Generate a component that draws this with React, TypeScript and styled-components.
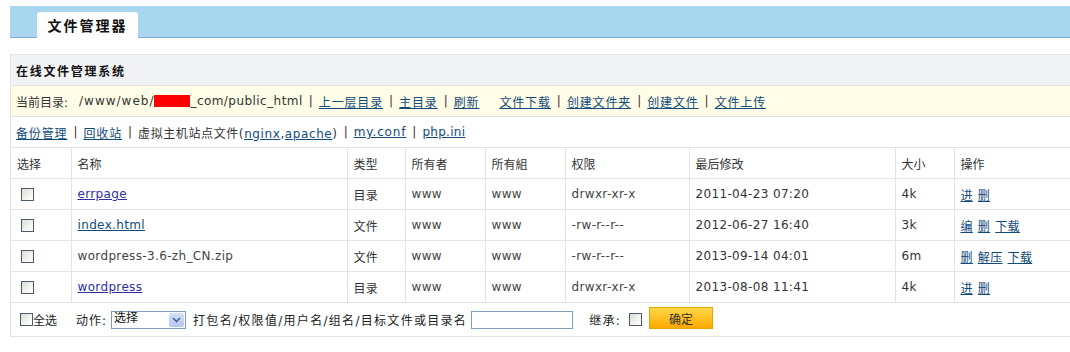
import React from 'react'
import styled, { createGlobalStyle } from 'styled-components'

const GlobalStyle = createGlobalStyle`
  html, body {
    margin: 0;
    padding: 0;
    background: #fff;
  }
  body {
    font-family: "DejaVu Sans", Verdana, "Noto Sans CJK SC", sans-serif;
    font-size: 12px;
    color: #333;
  }
`

const Page = styled.div`
  padding: 6px 0 0 10px;
  width: 1060px;
`

const TopBar = styled.div`
  height: 32px;
  background: #a8d6ee;
  border-bottom: 1px solid #7fb0cf;
  display: flex;
  align-items: flex-end;
  padding-left: 27px;
  box-sizing: border-box;
`

const Tab = styled.div`
  width: 101px;
  height: 26px;
  background: #fff;
  border-radius: 3px 3px 0 0;
  margin-bottom: -1px;
  display: flex;
  align-items: center;
  justify-content: center;
  font-size: 14px;
  font-weight: bold;
  letter-spacing: 2px;
  color: #111;
`

const Panel = styled.div`
  margin-top: 16px;
  border-left: 1px solid #e3e3e3;
`

const Row = styled.div<{ $bg?: string; $height?: number }>`
  height: ${(p) => p.$height ?? 31}px;
  box-sizing: border-box;
  display: flex;
  align-items: center;
  padding-left: 5px;
  background: ${(p) => p.$bg ?? '#fff'};
  border-top: 1px solid #e2e4e6;
  white-space: nowrap;
  letter-spacing: 0.85px;
`

const PanelTitle = styled.span`
  font-weight: bold;
  letter-spacing: 1.7px;
  color: #111;
`

const A = styled.a<{ $visited?: boolean }>`
  color: ${(p) => (p.$visited ? '#2e2ea8' : '#124a7c')};
  text-decoration: underline;
  cursor: pointer;
`

const Sep = styled.span`
  margin: 0 6px;
  color: #4a2a2a;
  letter-spacing: 0;
`

const Path = styled.span<{ $ls: number }>`
  letter-spacing: ${(p) => p.$ls}px;
`

const Redact = styled.span`
  display: inline-block;
  width: 36px;
  height: 12px;
  background: #ff0000;
`

const Gap = styled.span<{ $w: number }>`
  display: inline-block;
  width: ${(p) => p.$w}px;
`

const Table = styled.table`
  border-collapse: collapse;
  width: 100%;
  table-layout: fixed;
  letter-spacing: 0.35px;

  th,
  td {
    height: 30px;
    padding: 0 0 0 6px;
    border-top: 1px solid #e2e4e6;
    border-left: 1px solid #e2e4e6;
    text-align: left;
    font-weight: normal;
    white-space: nowrap;
    color: #333;
  }
  th {
    letter-spacing: 0;
  }
  th:first-child,
  td:first-child {
    border-left: none;
  }
`

const Muted = styled.span`
  color: #444;
`

const Box = styled.span<{ $ml?: number }>`
  display: inline-block;
  flex: none;
  width: 11px;
  height: 11px;
  margin-left: ${(p) => p.$ml ?? 0}px;
  border: 1px solid #4b5b6b;
  background: linear-gradient(135deg, #dcdcd6 0%, #f4f4f0 60%, #ffffff 100%);
  vertical-align: middle;
`

const Ops = styled.span`
  display: inline-flex;
  gap: 5px;
`

const Footer = styled(Row)`
  border-bottom: 1px solid #e2e4e6;
  padding-left: 9px;
  letter-spacing: 0;
`

const Label = styled.span<{ $ml?: number; $ls?: number }>`
  margin-left: ${(p) => p.$ml ?? 0}px;
  letter-spacing: ${(p) => p.$ls ?? 0}px;
  color: #222;
`

const Select = styled.div`
  margin-left: 4px;
  width: 75px;
  height: 18px;
  border: 1px solid #7f9db9;
  box-sizing: border-box;
  display: flex;
  align-items: flex-start;
  justify-content: space-between;
  background: #fff;
  padding-left: 2px;
  line-height: 13px;
  color: #111;
`

const SelectArrow = styled.span`
  width: 15px;
  height: 14px;
  margin: 1px;
  border-radius: 2px;
  background: linear-gradient(#d3e1fb, #b4c8f2);
  display: flex;
  align-items: center;
  justify-content: center;
`

const TextInput = styled.div`
  margin-left: 4px;
  width: 102px;
  height: 18px;
  border: 1px solid #7f9db9;
  box-sizing: border-box;
  background: #fff;
`

const Button = styled.div`
  margin-left: 7px;
  width: 64px;
  height: 22px;
  box-sizing: border-box;
  border: 1px solid #e8a400;
  background: linear-gradient(#ffd84a, #ffa800);
  display: flex;
  align-items: center;
  justify-content: center;
  color: #333;
  margin-top: -3px;
`

const files = [
  { name: 'errpage', link: true, visited: true, type: '目录', perm: 'drwxr-xr-x', date: '2011-04-23 07:20', size: '4k', ops: ['进', '删'] },
  { name: 'index.html', link: true, visited: false, type: '文件', perm: '-rw-r--r--', date: '2012-06-27 16:40', size: '3k', ops: ['编', '删', '下载'] },
  { name: 'wordpress-3.6-zh_CN.zip', link: false, visited: false, type: '文件', perm: '-rw-r--r--', date: '2013-09-14 04:01', size: '6m', ops: ['删', '解压', '下载'] },
  { name: 'wordpress', link: true, visited: true, type: '目录', perm: 'drwxr-xr-x', date: '2013-08-08 11:41', size: '4k', ops: ['进', '删'] },
]

export default function App() {
  return (
    <>
      <GlobalStyle />
      <Page>
        <TopBar>
          <Tab>文件管理器</Tab>
        </TopBar>
        <Panel>
          <Row $bg="#f2f3f5">
            <PanelTitle>在线文件管理系统</PanelTitle>
          </Row>
          <Row $bg="#fffde8">
            <Path $ls={0}>当前目录:</Path>
            <Gap $w={11} />
            <Path $ls={1}>/www/web/</Path>
            <Redact />
            <Path $ls={0.45}>_com/public_html</Path>
            <Sep>|</Sep>
            <A>上一层目录</A>
            <Sep>|</Sep>
            <A>主目录</A>
            <Sep>|</Sep>
            <A>刷新</A>
            <Gap $w={20} />
            <A>文件下载</A>
            <Sep>|</Sep>
            <A>创建文件夹</A>
            <Sep>|</Sep>
            <A>创建文件</A>
            <Sep>|</Sep>
            <A>文件上传</A>
          </Row>
          <Row>
            <A>备份管理</A>
            <Sep>|</Sep>
            <A>回收站</A>
            <Sep>|</Sep>
            <Path $ls={0.6}>
              虚拟主机站点文件(<A>nginx</A>,<A>apache</A>)
            </Path>
            <Sep>|</Sep>
            <A>my.conf</A>
            <Sep>|</Sep>
            <Path $ls={0.3}>
              <A>php.ini</A>
            </Path>
          </Row>
          <Table>
            <colgroup>
              <col style={{ width: 60 }} />
              <col style={{ width: 276 }} />
              <col style={{ width: 58 }} />
              <col style={{ width: 80 }} />
              <col style={{ width: 80 }} />
              <col style={{ width: 124 }} />
              <col style={{ width: 206 }} />
              <col style={{ width: 59 }} />
              <col />
            </colgroup>
            <thead>
              <tr>
                <th>选择</th>
                <th>名称</th>
                <th>类型</th>
                <th>所有者</th>
                <th>所有組</th>
                <th>权限</th>
                <th>最后修改</th>
                <th>大小</th>
                <th>操作</th>
              </tr>
            </thead>
            <tbody>
              {files.map((f) => (
                <tr key={f.name}>
                  <td>
                    <Box $ml={4} />
                  </td>
                  <td>{f.link ? <A $visited={f.visited}>{f.name}</A> : <Muted>{f.name}</Muted>}</td>
                  <td>{f.type}</td>
                  <td>
                    <Muted>www</Muted>
                  </td>
                  <td>
                    <Muted>www</Muted>
                  </td>
                  <td>
                    <Muted>{f.perm}</Muted>
                  </td>
                  <td>{f.date}</td>
                  <td>{f.size}</td>
                  <td>
                    <Ops>
                      {f.ops.map((o) => (
                        <A key={o}>{o}</A>
                      ))}
                    </Ops>
                  </td>
                </tr>
              ))}
            </tbody>
          </Table>
          <Footer $height={35}>
            <Box />
            <Label>全选</Label>
            <Label $ml={19} $ls={1}>动作:</Label>
            <Select>
              选择
              <SelectArrow>
                <svg width="9" height="6" viewBox="0 0 9 6">
                  <path d="M1 1 L4.5 4.5 L8 1" stroke="#4d6185" strokeWidth="1.6" fill="none" />
                </svg>
              </SelectArrow>
            </Select>
            <Label $ml={7} $ls={1.3}>打包名/权限值/用户名/组名/目标文件或目录名</Label>
            <TextInput />
            <Label $ml={16} $ls={1.3}>继承:</Label>
            <Box $ml={8} />
            <Button>确定</Button>
          </Footer>
        </Panel>
      </Page>
    </>
  )
}
